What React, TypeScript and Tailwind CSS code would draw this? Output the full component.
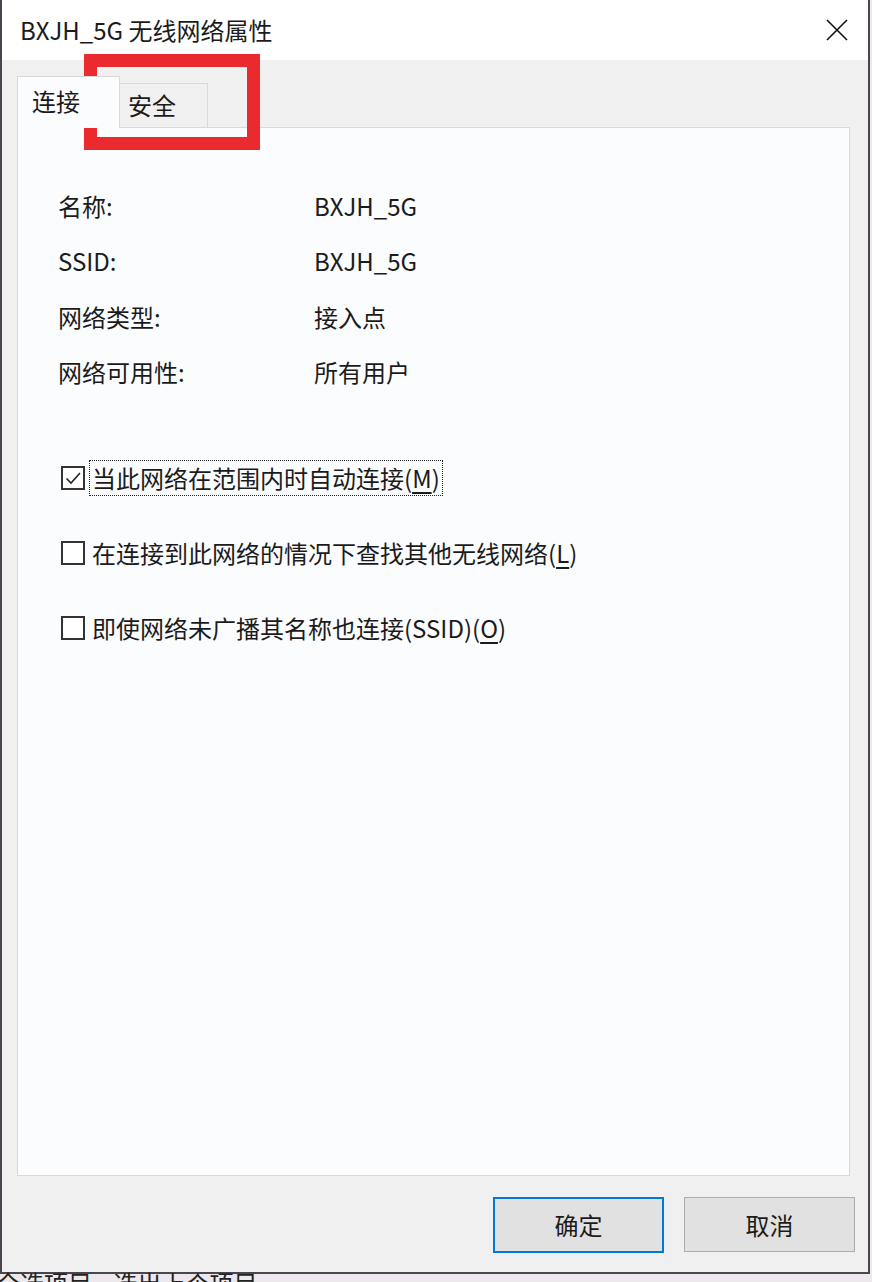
import type { ReactNode } from 'react';

const FONT = { fontFamily: '"Microsoft YaHei UI", "Noto Sans CJK SC", "Noto Sans", sans-serif' };

const details = [
  { label: '名称:', value: 'BXJH_5G' },
  { label: 'SSID:', value: 'BXJH_5G' },
  { label: '网络类型:', value: '接入点' },
  { label: '网络可用性:', value: '所有用户' },
];

function CheckBox({ checked }: { checked?: boolean }) {
  return (
    <span className="flex h-[24px] w-[24px] shrink-0 items-center justify-center border-2 border-[#333] bg-white">
      {checked && (
        <svg width="18" height="18" viewBox="0 0 18 18" fill="none">
          <path d="M2.5 9.5 L7 14 L16 4" stroke="#222" strokeWidth="1.6" />
        </svg>
      )}
    </span>
  );
}

function Option({
  checked,
  focused,
  children,
}: {
  checked?: boolean;
  focused?: boolean;
  children: ReactNode;
}) {
  return (
    <div className="flex h-[75px] items-center">
      <CheckBox checked={checked} />
      <span
        className={`ml-[5px] px-[2px] py-[1px] leading-[32px] ${
          focused ? 'outline-1 outline-dotted outline-[#222]' : 'outline-none'
        }`}
      >
        {children}
      </span>
    </div>
  );
}

export default function App() {
  return (
    <div className="relative h-[1282px] w-[872px] overflow-hidden bg-[#ece8ec] text-[#1b1b1b]" style={FONT}>
      {/* dialog window */}
      <div className="flex h-[1274px] w-[870px] flex-col border-x-2 border-b-2 border-[#4a4650] bg-[#f0f0f0]">
        {/* title bar */}
        <div className="flex h-[60px] shrink-0 items-center justify-between bg-white pl-[18px] pr-[18px]">
          <span className="text-[24px] leading-none">BXJH_5G 无线网络属性</span>
          <svg width="22" height="22" viewBox="0 0 22 22" className="mr-[2px]">
            <path d="M1 1 L21 21 M21 1 L1 21" stroke="#111" strokeWidth="1.6" />
          </svg>
        </div>

        {/* tabs */}
        <div className="mt-[16px] flex h-[51px] shrink-0 items-end pl-[15px]">
          <div className="relative z-10 flex h-[52px] w-[103px] -mb-px items-start border border-b-0 border-[#d9d9d9] bg-[#fbfcfd] pl-[14px] pt-[9px] text-[24px] leading-[30px]">
            连接
          </div>
          <div className="flex h-[44px] w-[88px] items-start border border-b-0 border-l-0 border-[#d9d9d9] bg-[#f0f0f0] pl-[8px] pt-[6px] text-[24px] leading-[30px]">
            安全
          </div>
        </div>

        {/* tab page */}
        <div className="ml-[15px] mr-[18px] flex-1 border border-[#d9d9d9] bg-[#fbfcfd] pl-[40px] pt-[50px] text-[24px]">
          <div className="grid grid-cols-[256px_1fr]">
            {details.map((d) => (
              <div key={d.label} className="contents">
                <div className="flex h-[55.5px] items-center">{d.label}</div>
                <div className="flex h-[55.5px] items-center">{d.value}</div>
              </div>
            ))}
          </div>

          <div className="-ml-[37px] mt-[40px] pl-[40px]">
            <Option checked focused>
              当此网络在范围内时自动连接(<span className="underline underline-offset-4">M</span>)
            </Option>
            <Option>
              在连接到此网络的情况下查找其他无线网络(<span className="underline underline-offset-4">L</span>)
            </Option>
            <Option>
              即使网络未广播其名称也连接(SSID)(<span className="underline underline-offset-4">O</span>)
            </Option>
          </div>
        </div>

        {/* footer buttons */}
        <div className="flex h-[96px] shrink-0 items-start justify-end gap-[20px] pr-[13px] pt-[21px]">
          <button className="h-[56px] w-[171px] border-2 border-[#0078d7] bg-[#e1e1e1] text-[24px]">确定</button>
          <button className="h-[55px] w-[171px] border border-[#adadad] bg-[#e1e1e1] text-[24px]">取消</button>
        </div>
      </div>

      {/* text of the page behind the dialog, mostly hidden */}
      <div className="absolute left-[-4px] top-[1268px] whitespace-nowrap text-[24px] leading-[30px] text-[#222]">
        全选项目 &nbsp;&nbsp; 选出上个项目
      </div>

      {/* red highlight around the security tab */}
      <div className="pointer-events-none absolute left-[84px] top-[54px] h-[96px] w-[176px] border-[13px] border-[#ea2a2f]" />
    </div>
  );
}
